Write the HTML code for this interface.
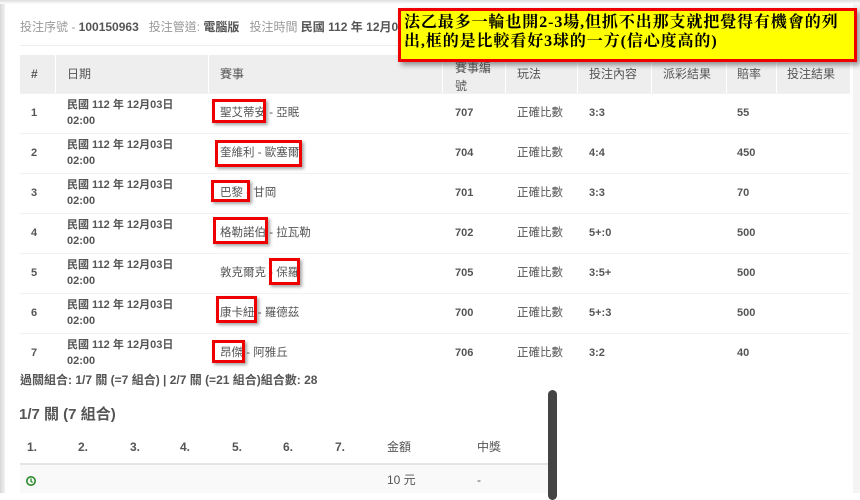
<!DOCTYPE html>
<html><head><meta charset="utf-8"><style>
*{margin:0;padding:0;box-sizing:border-box}
body{width:860px;height:493px;overflow:hidden;background:#fff;font-family:"Liberation Sans","Noto Sans CJK TC",sans-serif;color:#555;font-size:12px;position:relative}
.a{position:absolute;white-space:nowrap;line-height:14px}
.b{font-weight:bold}
.s{font-size:11px}
.box{position:absolute;border:3px solid #e00;box-shadow:2px 2px 3px rgba(0,0,0,.35)}
</style></head><body>
<div class="a" style="left:0;top:0;width:5px;height:493px;background:linear-gradient(to right,#d8d8d8,#f2f2f2)"></div>
<div class="a" style="left:853px;top:0;width:7px;height:493px;background:#f4f4f4"></div>
<div class="a" style="left:0;top:0;width:860px;height:4px;background:linear-gradient(#ddd,#fff)"></div>

<div class="a" style="left:20px;top:20px;font-size:12px;color:#999">投注序號 - <b style="color:#555">100150963</b>&nbsp;&nbsp; 投注管道: <b style="color:#555">電腦版</b>&nbsp;&nbsp; 投注時間 <b style="color:#555">民國 112 年 12月01</b></div>
<div class="a" style="left:20px;top:45px;width:830px;height:1px;background:#eee"></div>

<div class="a" style="left:20px;top:55px;width:830px;height:38px;background:#eee"></div>
<div class="a" style="left:55px;top:55px;width:1px;height:38px;background:#fff"></div>
<div class="a" style="left:208px;top:55px;width:1px;height:38px;background:#fff"></div>
<div class="a" style="left:442px;top:55px;width:1px;height:38px;background:#fff"></div>
<div class="a" style="left:505px;top:55px;width:1px;height:38px;background:#fff"></div>
<div class="a" style="left:577px;top:55px;width:1px;height:38px;background:#fff"></div>
<div class="a" style="left:651px;top:55px;width:1px;height:38px;background:#fff"></div>
<div class="a" style="left:726px;top:55px;width:1px;height:38px;background:#fff"></div>
<div class="a" style="left:776px;top:55px;width:1px;height:38px;background:#fff"></div>
<div class="a b" style="left:31px;top:67px">#</div>
<div class="a" style="left:67px;top:67px">日期</div>
<div class="a" style="left:220px;top:67px">賽事</div>
<div class="a" style="left:455px;top:59px;line-height:18px">賽事編<br>號</div>
<div class="a" style="left:517px;top:67px">玩法</div>
<div class="a" style="left:589px;top:67px">投注內容</div>
<div class="a" style="left:663px;top:67px">派彩結果</div>
<div class="a" style="left:737px;top:67px">賠率</div>
<div class="a" style="left:787px;top:67px">投注結果</div>

<div id="rows"></div>
<script>
var d=[["1","聖艾蒂安 - 亞眠","707","3:3","55"],["2","奎維利 - 歐塞爾","704","4:4","450"],["3","巴黎 - 甘岡","701","3:3","70"],["4","格勒諾伯 - 拉瓦勒","702","5+:0","500"],["5","敦克爾克 - 保羅","705","3:5+","500"],["6","康卡紐 - 羅德茲","700","5+:3","500"],["7","昂傑 - 阿雅丘","706","3:2","40"]];
var h="";d.forEach(function(r,i){var y=93+i*40;
h+='<div class="a" style="left:20px;top:'+y+'px;width:830px;height:40px;border-top:1px solid #f2f2f2"></div>';
h+='<div class="a b s" style="left:31px;top:'+(y+13)+'px">'+r[0]+'</div>';
h+='<div class="a b s" style="left:67px;top:'+(y+4)+'px;line-height:16px">民國 112 年 12月03日<br>02:00</div>';
h+='<div class="a" style="left:220px;top:'+(y+13)+'px;font-size:11.5px">'+r[1]+'</div>';
h+='<div class="a b s" style="left:455px;top:'+(y+13)+'px">'+r[2]+'</div>';
h+='<div class="a" style="left:517px;top:'+(y+13)+'px;font-size:11.5px">正確比數</div>';
h+='<div class="a b s" style="left:589px;top:'+(y+13)+'px">'+r[3]+'</div>';
h+='<div class="a b s" style="left:737px;top:'+(y+13)+'px">'+r[4]+'</div>';});
document.getElementById("rows").innerHTML=h;
</script>

<div class="box" style="left:212px;top:99px;width:54px;height:24px"></div>
<div class="box" style="left:215px;top:140px;width:87px;height:27px"></div>
<div class="box" style="left:211px;top:180px;width:39px;height:22px"></div>
<div class="box" style="left:213px;top:217px;width:55px;height:27px"></div>
<div class="box" style="left:269px;top:258px;width:31px;height:27px"></div>
<div class="box" style="left:216px;top:296px;width:41px;height:27px"></div>
<div class="box" style="left:212px;top:340px;width:33px;height:23px"></div>

<div class="a b" style="left:20px;top:373px">過關組合: 1/7 關 (=7 組合) | 2/7 關 (=21 組合)組合數: 28</div>
<div class="a b" style="left:19px;top:406px;font-size:15px;line-height:18px">1/7 關 (7 組合)</div>
<div class="a b" style="left:27px;top:440px">1.</div>
<div class="a b" style="left:78px;top:440px">2.</div>
<div class="a b" style="left:130px;top:440px">3.</div>
<div class="a b" style="left:180px;top:440px">4.</div>
<div class="a b" style="left:232px;top:440px">5.</div>
<div class="a b" style="left:283px;top:440px">6.</div>
<div class="a b" style="left:335px;top:440px">7.</div>
<div class="a" style="left:387px;top:440px">金額</div>
<div class="a" style="left:477px;top:440px">中獎</div>
<div class="a" style="left:20px;top:463px;width:530px;height:2px;background:#e5e5e5"></div>
<div class="a" style="left:20px;top:465px;width:530px;height:28px;background:#f9f9f9"></div>
<svg class="a" style="left:25px;top:475px" width="12" height="12" viewBox="0 0 12 12"><circle cx="6" cy="6" r="4.2" fill="none" stroke="#2a8a2a" stroke-width="1.6"/><path d="M6 3.5V6.3L7.6 7.5" fill="none" stroke="#2a8a2a" stroke-width="1.3"/></svg>
<div class="a" style="left:387px;top:473px">10 元</div>
<div class="a" style="left:477px;top:473px">-</div>
<div class="a" style="left:548px;top:390px;width:9px;height:110px;background:#444;border-radius:5px"></div>

<div class="a" style="left:398px;top:8px;width:459px;height:54px;background:#ff0;border:3px solid #e00;box-shadow:3px 3px 5px rgba(0,0,0,.4)"></div>
<div class="a" style="left:404px;top:13px;font-family:'Liberation Serif','Noto Serif CJK SC',serif;font-weight:bold;font-size:16px;line-height:19px;color:#000;letter-spacing:0.9px">法乙最多一輪也開2-3場,但抓不出那支就把覺得有機會的列<br>出,框的是比較看好3球的一方(信心度高的)</div>
</body></html>
